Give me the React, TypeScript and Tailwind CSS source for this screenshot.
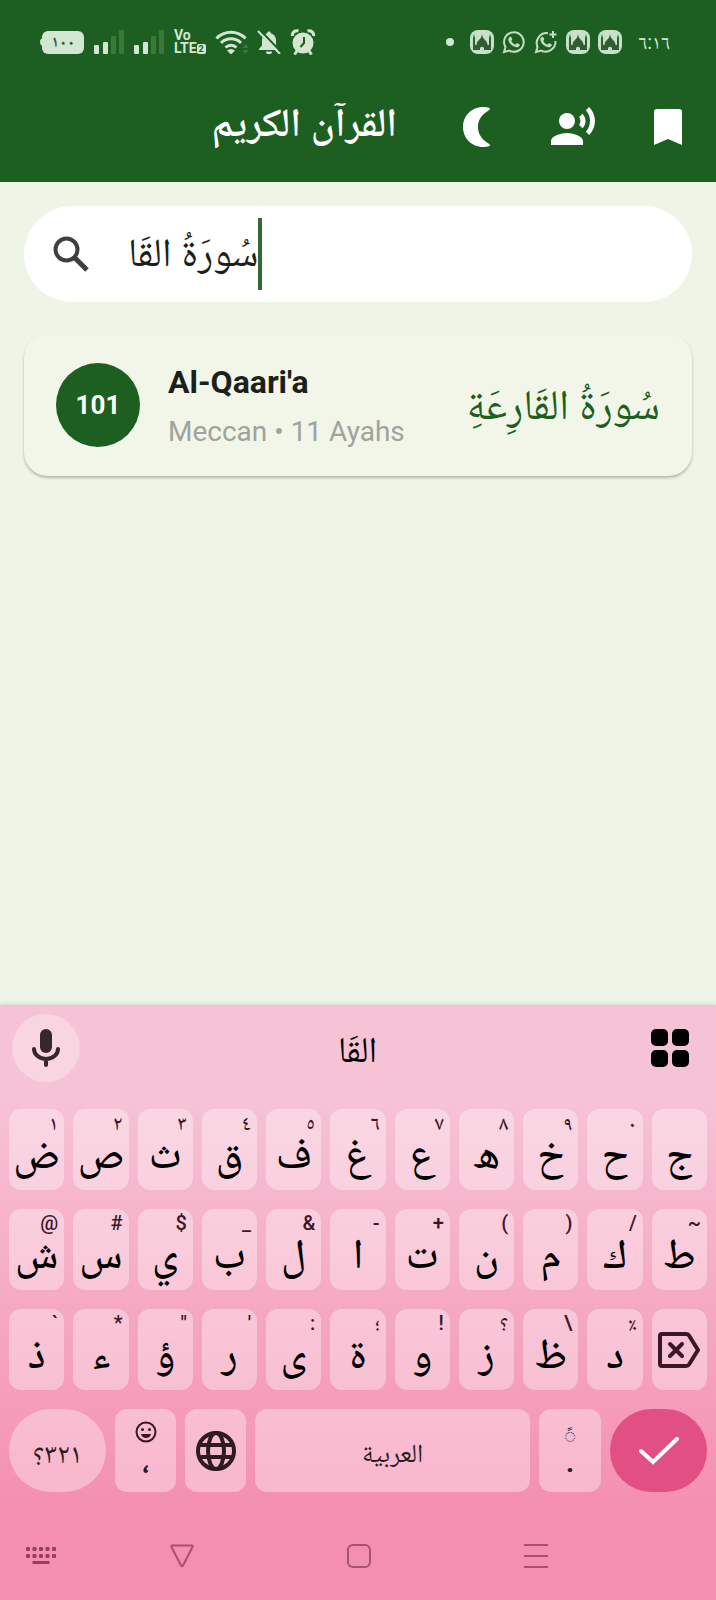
import React, { useState } from 'react';

interface KeyDef {
  label: string;
  hint?: string;
}

const KEY_ROWS: KeyDef[][] = [
  [
    { label: 'ض', hint: '١' },
    { label: 'ص', hint: '٢' },
    { label: 'ث', hint: '٣' },
    { label: 'ق', hint: '٤' },
    { label: 'ف', hint: '٥' },
    { label: 'غ', hint: '٦' },
    { label: 'ع', hint: '٧' },
    { label: 'ه', hint: '٨' },
    { label: 'خ', hint: '٩' },
    { label: 'ح', hint: '٠' },
    { label: 'ج' }
  ],
  [
    { label: 'ش', hint: '@' },
    { label: 'س', hint: '#' },
    { label: 'ي', hint: '$' },
    { label: 'ب', hint: '_' },
    { label: 'ل', hint: '&' },
    { label: 'ا', hint: '-' },
    { label: 'ت', hint: '+' },
    { label: 'ن', hint: '(' },
    { label: 'م', hint: ')' },
    { label: 'ك', hint: '/' },
    { label: 'ط', hint: '~' }
  ],
  [
    { label: 'ذ', hint: '`' },
    { label: 'ء', hint: '*' },
    { label: 'ؤ', hint: '"' },
    { label: 'ر', hint: "'" },
    { label: 'ى', hint: ':' },
    { label: 'ة', hint: '؛' },
    { label: 'و', hint: '!' },
    { label: 'ز', hint: '؟' },
    { label: 'ظ', hint: '\\' },
    { label: 'د', hint: '٪' }
  ]
];

function SignalBars() {
  return (
    <svg viewBox="0 0 30 24" className="h-6 w-[30px]" fill="#d3e6d2">
      <rect x="0" y="15" width="5" height="9" rx="1" />
      <rect x="9" y="12" width="5" height="12" rx="1" />
      <rect x="17" y="6" width="5" height="18" rx="1" fill="#397a3b" />
      <rect x="25" y="0" width="5" height="24" rx="1" fill="#397a3b" />
    </svg>
  );
}

function MosqueIcon() {
  return (
    <svg viewBox="0 0 24 24" className="size-6">
      <rect width="24" height="24" rx="8" fill="#c9e0c8" />
      <path
        fill="#2f5f31"
        d="M3 20V8l1-4 1 4v7h1.500c0-4 3.500-5 5-8.500l.5-2.500.5 2.500c1.500 3.500 5 4.500 5 8.500H19V8l1-4 1 4v12h-7v-2q-2-2.500-4 0v2z"
      />
    </svg>
  );
}

function WhatsAppIcon({ plus }: { plus?: boolean }) {
  return (
    <svg viewBox="0 0 24 24" className="size-6" fill="none" stroke="#c4dcc3" strokeWidth="2">
      <path
        d={
          plus
            ? 'M14 3.200A10 10 0 0 0 3.500 17L2 22l5.200-1.400A10 10 0 0 0 21.500 11'
            : 'M12 2.200A9.800 9.800 0 0 0 3.500 17L2 22l5.200-1.400A9.800 9.800 0 1 0 12 2.200z'
        }
      />
      {plus && <path d="M19 1v7M15.500 4.500h7" />}
      <path
        stroke="none"
        fill="#c4dcc3"
        d="M8.300 6.800c.5-.2.9 0 1.100.5l.8 1.900c.1.400 0 .6-.9 1.700.9 1.800 2.200 3 4.100 3.800l1.300-1.400c.2-.2.5-.2.8-.1l1.900 1c.5.3.5.8.3 1.300-.6 1.500-2.100 2-3.500 1.700-4-.9-6.900-3.600-7.800-7-.3-1.600.600-3 1.900-3.400z"
      />
    </svg>
  );
}

function StatusBar() {
  return (
    <div className="flex h-[84px] items-center pl-10 pr-[46px] text-[#d3e6d2]">
      <span className="-mr-0.5 h-2 w-1 rounded-l-sm bg-[#d3e6d2]" />
      <span dir="rtl" className="flex h-[23px] w-[42px] items-center justify-center rounded-md bg-[#d3e6d2] text-base font-bold leading-5 text-[#2f5f31]">
        ١٠٠
      </span>
      <div className="ml-2.5 flex items-center gap-2.5">
        <SignalBars />
        <SignalBars />
        <span className="flex w-[31px] flex-col text-sm font-bold leading-[13px]">
          <span>Vo</span>
          <span className="flex items-center">
            LTE
            <span className="rounded-xs bg-[#d3e6d2] px-0.5 text-[9px] leading-[10px] text-[#1d5f20]">2</span>
          </span>
        </span>
        <svg viewBox="0 0 34 24" className="h-6 w-[34px]" fill="none" stroke="#d3e6d2" strokeWidth="3">
          <path d="M1.500 8.500a20 20 0 0 1 29 0M6 13a14 14 0 0 1 20 0M10.500 17.500a8 8 0 0 1 11 0" />
          <path d="M12 20.500q4-3 8 0l-4 4z" fill="#d3e6d2" stroke="none" />
          <path d="M30.500 14l3 4h-6zM30.500 24l3-4h-6z" fill="#397a3b" stroke="none" />
        </svg>
        <svg viewBox="0 0 24 24" className="-ml-0.5 size-6">
          <path
            fill="#d3e6d2"
            d="M12 1.500c1 0 1.800.7 1.800 1.700 3.200.8 5.200 3.500 5.200 6.800v5.500l3 3.500v1H2v-1l3-3.500V10c0-3.300 2-6 5.200-6.800 0-1 .8-1.700 1.800-1.700zM9 21.500h6a3 3 0 0 1-6 0z"
          />
          <path d="M2.500-.5l22 23" stroke="#1d5f20" strokeWidth="2" />
          <path d="M1 1l22 23" stroke="#d3e6d2" strokeWidth="2" />
        </svg>
        <svg viewBox="0 0 24 26" className="h-[26px] w-6">
          <circle cx="12" cy="14" r="10.500" fill="#d3e6d2" />
          <path
            d="M1.500 7a4.500 4.500 0 0 1 6-5M16.500 2a4.500 4.500 0 0 1 6 5M6 22l-2.500 3.500M18 22l2.500 3.500"
            stroke="#d3e6d2"
            strokeWidth="3"
            fill="none"
          />
          <path d="M13 8v6l-3.500 4" stroke="#1d5f20" strokeWidth="2" fill="none" />
        </svg>
      </div>
      <div className="ml-auto flex items-center gap-2">
        <span className="mr-2 size-2 rounded-full bg-[#d3e6d2]" />
        <MosqueIcon />
        <WhatsAppIcon />
        <WhatsAppIcon plus />
        <MosqueIcon />
        <MosqueIcon />
        <span className="ml-2 text-xl leading-6">٦:١٦</span>
      </div>
    </div>
  );
}

function AppBar() {
  return (
    <div className="flex h-[98px] items-center pb-3 pr-6">
      <h1 dir="rtl" className="mb-2 ml-auto text-[40px] font-semibold leading-[48px]">القرآن الكريم</h1>
      <button aria-label="Dark mode" className="ml-[55px] flex size-12 items-center justify-center">
        <svg viewBox="0 0 27 40" className="h-10 w-[27px]" fill="#fff">
          <path d="M20 0c2.500 0 4.500.3 6 .8 1.300.5 1.100 1.500.2 2.200C18 8 15 13.500 15 20s3 12 11.200 17c.9.700 1.100 1.700-.2 2.200-1.500.5-3.500.8-6 .8C8.500 40 0 31 0 20S8.500 0 20 0z" />
        </svg>
      </button>
      <button aria-label="Reciter" className="ml-[49px] flex size-12 items-center justify-center">
        <svg viewBox="0 2 24 20" className="h-10 w-12" fill="#fff">
          <circle cx="9" cy="9" r="4" />
          <path d="M9 15c-2.670 0-8 1.340-8 4v2h16v-2c0-2.660-5.330-4-8-4zm7.760-9.640l-1.680 1.690c.84 1.180.84 2.710 0 3.890l1.680 1.690c2.020-2.020 2.020-5.070 0-7.270zM20.070 2l-1.630 1.630c2.770 3.020 2.770 7.560 0 10.740L20.070 16c3.900-3.890 3.910-9.950 0-14z" />
        </svg>
      </button>
      <button aria-label="Bookmarks" className="ml-[47px] flex size-12 items-center justify-center">
        <svg viewBox="0 0 28 36" className="h-9 w-7" fill="#fff">
          <path d="M3 0h22q3 0 3 3v33l-14-6-14 6V3q0-3 3-3z" />
        </svg>
      </button>
    </div>
  );
}

function SearchBox() {
  const [query, setQuery] = useState('سُورَةُ القَا');

  return (
    <label className="flex h-24 items-center rounded-full bg-white pl-[29px]">
      <svg viewBox="0 0 36 36" className="size-9 shrink-0" fill="none" stroke="#3f403e" strokeWidth="4">
        <circle cx="13.500" cy="13.500" r="11" />
        <path d="M22 22l12 12" strokeWidth="5" />
      </svg>
      <input
        aria-label="Search surah"
        value={query}
        onChange={(e) => setQuery(e.target.value)}
        className="field-sizing-content ml-[39px] h-[72px] pt-1.5 text-[40px] text-[#1c1f1a] caret-transparent outline-none"
      />
      <span className="h-[72px] w-1 bg-[#346936]" />
    </label>
  );
}

function SurahCard() {
  return (
    <a href="#surah-101" className="flex items-center rounded-3xl bg-[#f1f6e9] px-8 py-6 shadow-[0_2px_3px_rgba(0,0,0,0.25)]">
      <span className="flex size-[84px] items-center justify-center rounded-full bg-[#1d5f20] text-[26px] font-bold text-white">
        101
      </span>
      <span className="ml-7 flex flex-col pt-1">
        <span className="text-[32px] font-bold leading-[40px] text-[#1c1f1a]">Al-Qaari'a</span>
        <span className="mt-2.5 text-[28px] leading-[40px] text-[#a0a39c]">Meccan • 11 Ayahs</span>
      </span>
      <span dir="rtl" className="ml-auto text-[42px] leading-[48px] text-[#1d5f20]">سُورَةُ القَارِعَةِ</span>
    </a>
  );
}

function Key({ label, hint }: KeyDef) {
  return (
    <button className="relative flex h-[81px] min-w-0 items-end justify-center rounded-xl bg-white/35 text-[42px] font-medium leading-[72px] text-black">
      {label}
      {hint && <span className="absolute right-1.5 top-0.5 text-xl font-medium leading-6 text-[#3b1626]">{hint}</span>}
    </button>
  );
}

function Keyboard() {
  return (
    <section className="flex flex-col bg-linear-to-b from-[#f6c3d6] from-15% via-[#f6a9c4] via-50% to-[#f48fb1] to-85% text-[#2e1a22] shadow-[0_-1px_4px_rgba(0,0,0,0.12)]">
      <div className="flex h-[86px] items-center justify-between pl-3 pr-[27px]">
        <button aria-label="Voice input" className="flex size-[68px] items-center justify-center rounded-full bg-white/30">
          <svg viewBox="0 0 28 38" className="h-[38px] w-7" fill="none" stroke="#37262d" strokeWidth="4" strokeLinecap="round">
            <rect x="8" y="0" width="12" height="24" rx="6" fill="#37262d" stroke="none" />
            <path d="M2 20a12 10 0 0 0 24 0M14 30v6" />
          </svg>
        </button>
        <button dir="rtl" className="mr-4 pt-1 text-[36px] leading-10 text-black">القَا</button>
        <button aria-label="Keyboard menu">
          <svg viewBox="0 0 38 38" className="size-[38px]" fill="#000">
            <rect width="17" height="17" rx="5" />
            <rect x="21" width="17" height="17" rx="5" />
            <rect y="21" width="17" height="17" rx="5" />
            <rect x="21" y="21" width="17" height="17" rx="5" />
          </svg>
        </button>
      </div>
      <div className="mt-[18px] grid grid-cols-11 gap-x-[9px] gap-y-[19px] px-[9px]">
        {KEY_ROWS.flat().map((k) => (
          <Key key={k.label} label={k.label} hint={k.hint} />
        ))}
        <button aria-label="Backspace" className="flex h-[81px] items-center justify-center rounded-xl bg-white/35">
          <svg
            viewBox="0 0 42 36"
            className="h-9 w-[42px]"
            fill="none"
            stroke="#3b1626"
            strokeWidth="4"
            strokeLinecap="round"
            strokeLinejoin="round"
          >
            <path d="M4 2h24q2 0 3 1.500L40 18l-9 14.500q-1 1.500-3 1.500H4q-2 0-2-2V4q0-2 2-2z" />
            <path d="M12 12l12 12M24 12L12 24" />
          </svg>
        </button>
      </div>
      <div className="mt-[19px] flex h-[83px] gap-[9px] px-[9px]">
        <button dir="rtl" className="w-[97px] rounded-full bg-white/35 pt-1.5 text-[28px]">٣٢١؟</button>
        <button aria-label="Emoji" className="flex w-[61px] flex-col items-center rounded-xl bg-white/35 pt-3">
          <svg viewBox="0 0 22 22" className="size-[22px]" fill="none" stroke="#3b1626" strokeWidth="2">
            <circle cx="11" cy="11" r="9.500" />
            <path d="M6 13h10q-1 4-5 4t-5-4z" fill="#3b1626" stroke="none" />
            <circle cx="7.500" cy="8.500" r="1.500" fill="#3b1626" stroke="none" />
            <circle cx="14.500" cy="8.500" r="1.500" fill="#3b1626" stroke="none" />
          </svg>
          <span className="text-[28px] font-bold leading-10">،</span>
        </button>
        <button aria-label="Language" className="flex w-[61px] items-center justify-center rounded-xl bg-white/35">
          <svg viewBox="0 0 40 40" className="size-10" fill="none" stroke="#2e1a22" strokeWidth="4">
            <circle cx="20" cy="20" r="18" />
            <ellipse cx="20" cy="20" rx="8" ry="18" />
            <path d="M4 14h32M4 26h32" />
          </svg>
        </button>
        <button dir="rtl" className="flex-1 rounded-xl bg-white/35 pt-1.5 text-[26px]">العربية</button>
        <button className="flex w-[62px] flex-col items-center rounded-xl bg-white/35 pt-3">
          <span className="text-xl leading-6">◌ً</span>
          <span className="text-[28px] font-bold leading-9">.</span>
        </button>
        <button aria-label="Done" className="flex w-[97px] items-center justify-center rounded-full bg-[#e25083]">
          <svg viewBox="0 0 40 28" className="h-7 w-10" fill="none" stroke="#fff" strokeWidth="4" strokeLinecap="round">
            <path d="M2 14l12 11L38 2" />
          </svg>
        </button>
      </div>
      <NavBar />
    </section>
  );
}

function NavBar() {
  return (
    <nav className="flex h-[108px] items-center pt-5">
      <button aria-label="Switch keyboard" className="w-[94px] pl-[26px]">
        <svg viewBox="0 0 30 18" className="h-[18px] w-[30px]" fill="#963f60">
          {[0, 6.5, 13, 19.5, 26].map((x) => (
            <React.Fragment key={x}>
              <rect x={x} y="0" width="4" height="4" rx="1" />
              <rect x={x} y="7" width="4" height="4" rx="1" />
            </React.Fragment>
          ))}
          <rect x="6.500" y="14" width="17" height="3" />
        </svg>
      </button>
      <div className="mr-[92px] grid flex-1 grid-cols-3 place-items-center">
        <button aria-label="Back">
          <svg viewBox="0 0 24 24" className="size-6" fill="none" stroke="#a9506f" strokeWidth="2" strokeLinejoin="round">
            <path d="M2 1.500h20q1 0 .5 1.500L13 21.500q-1 1.500-2 0L1.500 3Q1 1.500 2 1.500z" />
          </svg>
        </button>
        <button aria-label="Home">
          <svg viewBox="0 0 24 24" className="size-6" fill="none" stroke="#a9506f" strokeWidth="2">
            <rect x="1" y="1" width="22" height="22" rx="5" />
          </svg>
        </button>
        <button aria-label="Recents">
          <svg viewBox="0 0 24 24" className="size-6" stroke="#a9506f" strokeWidth="2">
            <path d="M0 1h24M0 12h24M0 23h24" />
          </svg>
        </button>
      </div>
    </nav>
  );
}

export default function App() {
  return (
    <div className="flex min-h-screen flex-col bg-[#eef5e6] font-[Roboto,'Noto_Naskh_Arabic',serif]">
      <header className="bg-[#1d5f20] text-white">
        <StatusBar />
        <AppBar />
      </header>
      <main className="flex flex-1 flex-col gap-8 px-6 pt-6">
        <SearchBox />
        <SurahCard />
      </main>
      <Keyboard />
    </div>
  );
}
